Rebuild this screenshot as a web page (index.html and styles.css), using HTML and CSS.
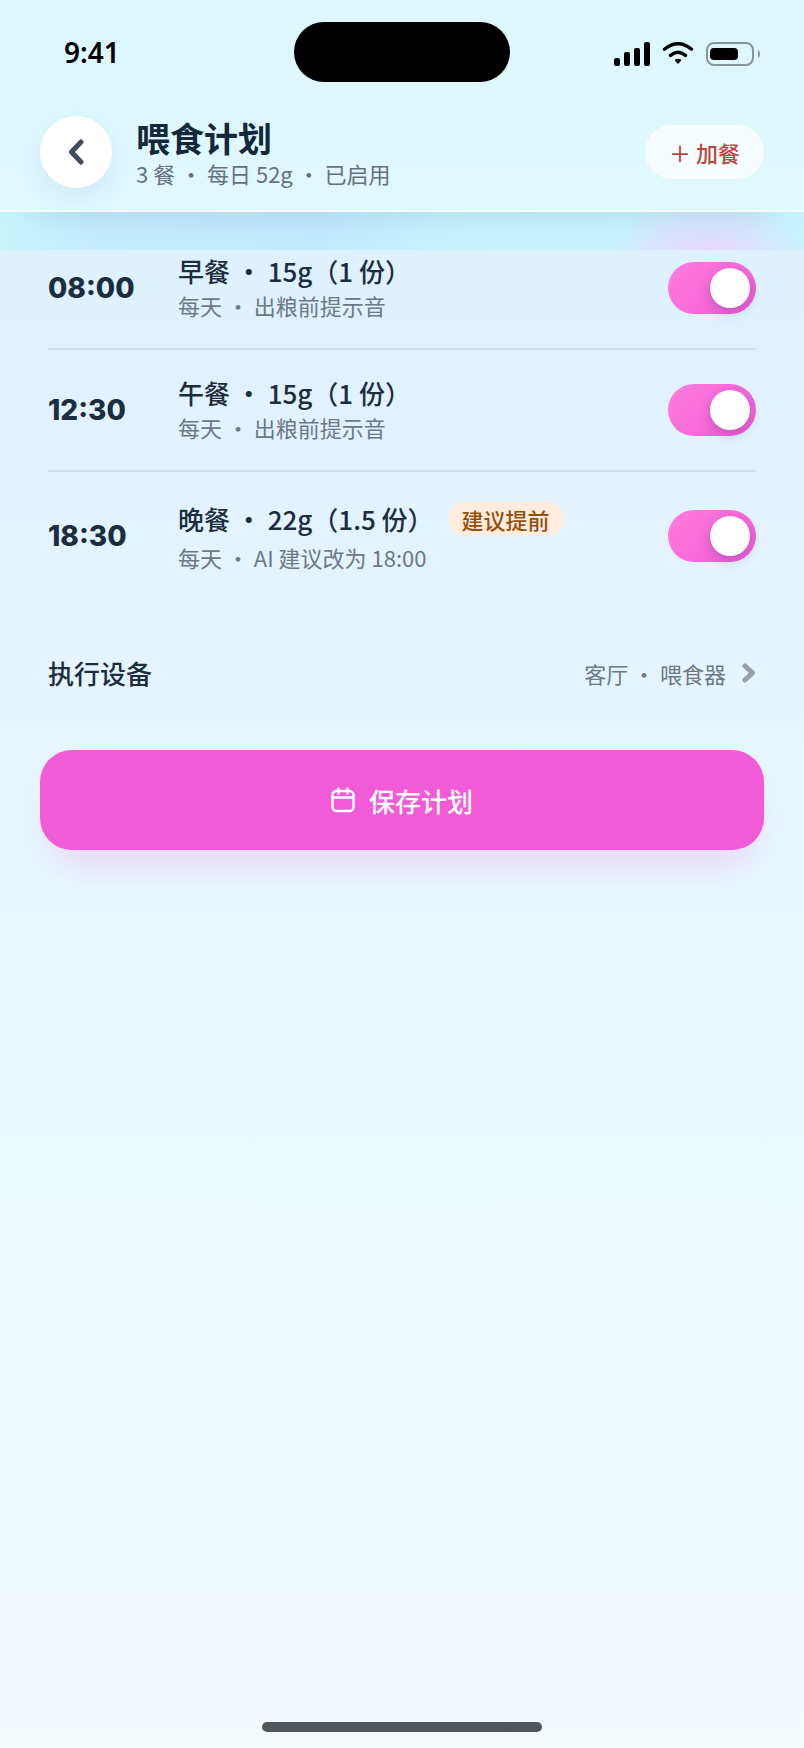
FILE: index.html
```html
<!DOCTYPE html>
<html lang="zh-CN">
<head>
    <meta charset="UTF-8">
    <meta name="viewport" content="width=device-width, initial-scale=1.0">
    <title>喂食计划</title>
    <link rel="stylesheet" href="styles.css">
</head>
<body>
    <div class="screen">
        <header class="top">
            <div class="status-bar">
                <span class="clock">9:41</span>
                <div class="island"></div>
                <div class="status-icons">
                    <svg width="36" height="24" viewBox="0 0 36 24">
                        <rect x="0" y="16" width="6" height="8" rx="2"/>
                        <rect x="10" y="10" width="6" height="14" rx="2"/>
                        <rect x="20" y="6" width="6" height="18" rx="2"/>
                        <rect x="30" y="0" width="6" height="24" rx="2"/>
                    </svg>
                    <svg width="32" height="24" viewBox="0 0 32 24">
                        <path d="M2.500 7.200Q16 -3.800 29.500 7.200M8.500 13.400Q16 7 23.500 13.400" fill="none" stroke="#000" stroke-width="3.400" stroke-linecap="round"/>
                        <path d="M16 22l-3-3.200q-.6-1.200.8-1.600q2.200-.7 4.400 0q1.400.4.8 1.600z"/>
                    </svg>
                    <svg width="54" height="24" viewBox="0 0 54 24">
                        <rect x="1" y="1" width="46" height="22" rx="7" fill="none" stroke="#000" stroke-opacity=".4" stroke-width="2"/>
                        <rect x="4" y="6" width="28" height="12" rx="4"/>
                        <path d="M52 8q2 1 2 4t-2 4z" fill-opacity=".4"/>
                    </svg>
                </div>
            </div>
            <div class="nav">
                <button class="back" type="button" aria-label="返回">
                    <svg width="16" height="28" viewBox="0 0 16 28" fill="none" stroke="#414d5e" stroke-width="5" stroke-linecap="round" stroke-linejoin="round">
                        <path d="M13 4L3.500 14L13 24"/>
                    </svg>
                </button>
                <div class="heading">
                    <h1>喂食计划</h1>
                    <p>3 餐 ・ 每日 52g ・ 已启用</p>
                </div>
                <button class="add" type="button">＋ 加餐</button>
            </div>
        </header>

        <div class="hero-edge"></div>

        <main class="content">
            <ul class="meals">
                <li class="meal">
                    <time class="meal-time">08:00</time>
                    <label class="meal-info" for="meal1">
                        <span class="meal-title">早餐 ・ 15g（1 份）</span>
                        <span class="meal-sub">每天 ・ 出粮前提示音</span>
                    </label>
                    <input class="switch" type="checkbox" id="meal1" checked>
                </li>
                <li class="meal">
                    <time class="meal-time">12:30</time>
                    <label class="meal-info" for="meal2">
                        <span class="meal-title">午餐 ・ 15g（1 份）</span>
                        <span class="meal-sub">每天 ・ 出粮前提示音</span>
                    </label>
                    <input class="switch" type="checkbox" id="meal2" checked>
                </li>
                <li class="meal">
                    <time class="meal-time">18:30</time>
                    <label class="meal-info" for="meal3">
                        <span class="meal-title">晚餐 ・ 22g（1.5 份）<span class="badge">建议提前</span></span>
                        <span class="meal-sub">每天 ・ AI 建议改为 18:00</span>
                    </label>
                    <input class="switch" type="checkbox" id="meal3" checked>
                </li>
            </ul>

            <a class="device" href="#">
                <span class="device-label">执行设备</span>
                <span class="device-value">客厅 ・ 喂食器</span>
                <svg width="14" height="20" viewBox="0 0 14 20" fill="none" stroke="#98a0ac" stroke-width="5" stroke-linecap="round" stroke-linejoin="round">
                    <path d="M3 3L10.500 10L3 17"/>
                </svg>
            </a>

            <button class="save" type="button">
                <svg width="24" height="26" viewBox="0 0 24 26" fill="none" stroke="#fff" stroke-width="2.400" stroke-linecap="round" stroke-linejoin="round">
                    <rect x="1.500" y="4" width="21" height="20" rx="4"/>
                    <path d="M1.500 10.500h21M7.500 1.500v5M16.500 1.500v5"/>
                </svg>
                保存计划
            </button>
        </main>

        <div class="home-indicator"></div>
    </div>
</body>
</html>
```
FILE: styles.css
```css
* {
    box-sizing: border-box;
}

body {
    margin: 0;
    font-family: "Noto Sans CJK SC", sans-serif;
    font-size: 22px;
    color: #1d2d40;
}

h1, p, ul {
    margin: 0;
    padding: 0;
}

button {
    border: none;
    font-family: inherit;
    cursor: pointer;
}

.screen {
    display: flex;
    flex-direction: column;
    min-height: 100vh;
    background: linear-gradient(to bottom, #def1ff 14%, #e8f7ff 51%, #effaff 82%, #f4fbff 100%);
}

/* Header */
.top {
    position: relative;
    background: linear-gradient(to bottom, #ddf7ff, #e0f8ff);
    border-bottom: 2px solid #f4fdff;
    box-shadow: 0 24px 36px -28px rgba(60, 100, 140, 0.24);
}

.status-bar {
    display: grid;
    grid-template-columns: 1fr auto 1fr;
    padding: 22px 44px 0;
}

.clock {
    padding-left: 20px;
    font-family: "Noto Sans", sans-serif;
    font-size: 28px;
    font-weight: 600;
    line-height: 60px;
    color: #000;
}

.island {
    width: 216px;
    height: 60px;
    border-radius: 30px;
    background: #000;
}

.status-icons {
    display: flex;
    justify-content: flex-end;
    align-items: center;
    gap: 12px;
    padding-top: 4px;
}

.nav {
    display: flex;
    align-items: center;
    padding: 34px 40px 22px;
}

.back {
    display: flex;
    justify-content: center;
    align-items: center;
    width: 72px;
    height: 72px;
    padding: 0;
    border-radius: 50%;
    background: #fff;
    box-shadow: 0 8px 24px rgba(60, 110, 150, 0.1);
}

.heading {
    flex: 1;
    padding: 2px 0 0 24px;
}

.heading h1 {
    font-size: 34px;
    font-weight: 700;
    line-height: 40px;
    color: #14283c;
}

.heading p {
    line-height: 30px;
    color: #65717f;
}

.add {
    height: 54px;
    padding: 0 24px;
    border-radius: 27px;
    background: #f5fdff;
    color: #ba473f;
    font-size: 22px;
    font-weight: 500;
}

.hero-edge {
    height: 38px;
    background:
        radial-gradient(ellipse 100px 60px at 88% 120%, #ecd4ff, transparent),
        linear-gradient(to right, #c9f5ff, #c6ecff 12%, #c4eaff 40%, #caf3ff 58%, #caf4ff);
}

/* Meals */
.content {
    flex: 1;
    padding: 0 40px;
}

.meals {
    padding: 0 8px;
    list-style: none;
}

.meal {
    display: flex;
    align-items: center;
    padding: 26px 0;
    border-bottom: 2px solid #cfe0f1;
}

.meal:first-child {
    padding-top: 4px;
}

.meal:last-child {
    border-bottom: none;
}

.meal-time {
    width: 130px;
    font-family: Inter, sans-serif;
    font-size: 28px;
    font-weight: 800;
    line-height: 40px;
}

.meal-info {
    flex: 1;
}

.meal-title {
    display: flex;
    align-items: center;
    gap: 14px;
    font-size: 26px;
    font-weight: 500;
    line-height: 34px;
}

.meal-sub {
    display: block;
    line-height: 34px;
    color: #6d7986;
}

.badge {
    margin: 4px 0;
    padding: 0 14px;
    border-radius: 17px;
    background: #ffecdc;
    color: #94500f;
    font-size: 22px;
    line-height: 34px;
}

.switch {
    appearance: none;
    display: flex;
    align-items: center;
    width: 88px;
    height: 52px;
    margin: 0;
    padding: 6px;
    border-radius: 26px;
    background: #c8d3de;
    cursor: pointer;
}

.switch::before {
    content: "";
    width: 40px;
    height: 40px;
    border-radius: 50%;
    background: #fff;
    box-shadow: 0 4px 12px rgba(30, 50, 90, 0.25);
}

.switch:checked {
    justify-content: flex-end;
    background: linear-gradient(135deg, #ff7de0, #f25ad6);
}

/* Device and save */
.device {
    display: flex;
    align-items: center;
    padding: 54px 8px 58px;
    color: inherit;
    line-height: 38px;
    text-decoration: none;
}

.device-label {
    flex: 1;
    font-size: 26px;
    font-weight: 500;
}

.device-value {
    margin-right: 16px;
    color: #6d7986;
}

.save {
    display: flex;
    justify-content: center;
    align-items: center;
    gap: 14px;
    width: 100%;
    height: 100px;
    border-radius: 32px;
    background: #f25bd8;
    box-shadow: 0 24px 40px -16px rgba(243, 91, 216, 0.28);
    color: #fff;
    font-size: 26px;
    font-weight: 500;
}

.home-indicator {
    width: 280px;
    height: 10px;
    margin: 0 auto 16px;
    border-radius: 5px;
    background: #50565e;
}
```
